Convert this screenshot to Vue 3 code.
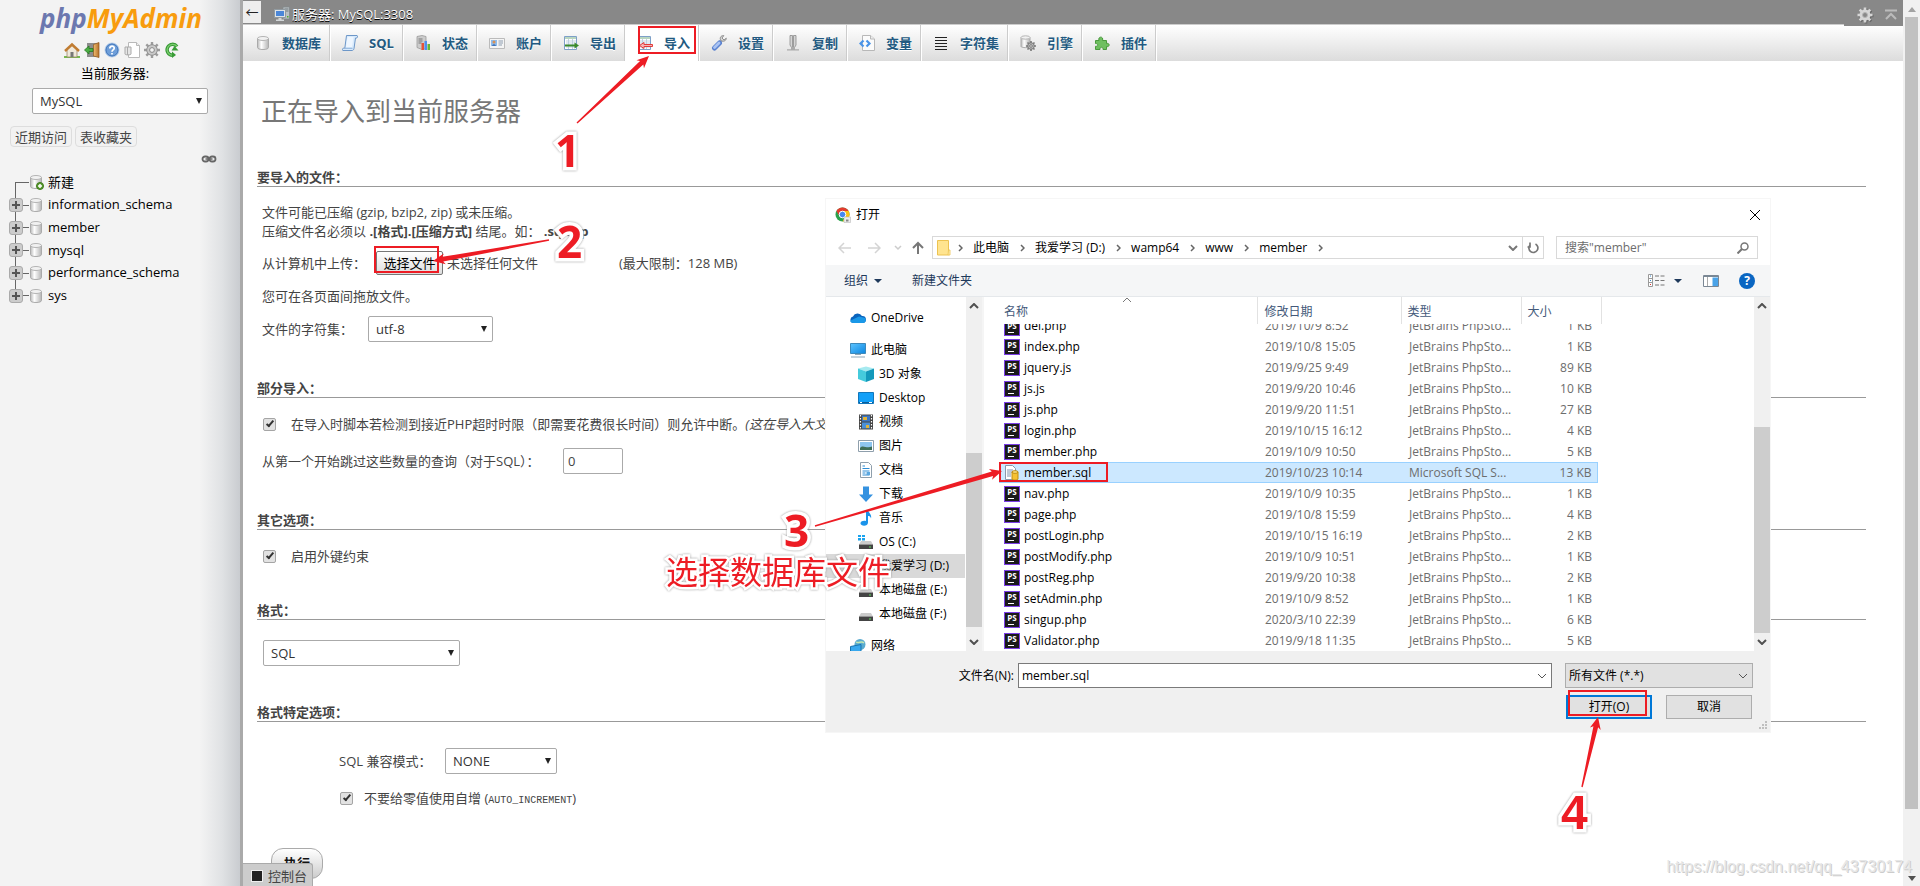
<script setup>
import { ref } from 'vue'

const server = ref('MySQL')
const charset = ref('utf-8')
const format = ref('SQL')
const compat = ref('NONE')
const skip = ref('0')
const allowInterrupt = ref(true)
const foreignKeys = ref(true)
const noAutoIncrement = ref(true)
const fileName = ref('member.sql')
const fileType = ref('all')
const query = ref('')

const shortcuts = [
  { icon: 'home', label: '主页' },
  { icon: 'exit', label: '退出' },
  { icon: 'help', label: '文档' },
  { icon: 'docs', label: '手册' },
  { icon: 'gear', label: '设置' },
  { icon: 'reload', label: '刷新' },
]

const databases = ['information_schema', 'member', 'mysql', 'performance_schema', 'sys']

const tabs = [
  { icon: 'db', label: '数据库' },
  { icon: 'sql', label: 'SQL' },
  { icon: 'status', label: '状态' },
  { icon: 'users', label: '账户' },
  { icon: 'export', label: '导出' },
  { icon: 'import', label: '导入', active: true },
  { icon: 'wrench', label: '设置' },
  { icon: 'replication', label: '复制' },
  { icon: 'vars', label: '变量' },
  { icon: 'charset', label: '字符集' },
  { icon: 'engine', label: '引擎' },
  { icon: 'plugin', label: '插件' },
]

const crumbs = ['此电脑', '我爱学习 (D:)', 'wamp64', 'www', 'member']

const places = [
  { icon: 'onedrive', label: 'OneDrive', top: true },
  { icon: 'pc', label: '此电脑', top: true },
  { icon: 'cube', label: '3D 对象' },
  { icon: 'desktop', label: 'Desktop' },
  { icon: 'video', label: '视频' },
  { icon: 'picture', label: '图片' },
  { icon: 'document', label: '文档' },
  { icon: 'download', label: '下载' },
  { icon: 'music', label: '音乐' },
  { icon: 'osdisk', label: 'OS (C:)' },
  { icon: 'disk', label: '我爱学习 (D:)', current: true },
  { icon: 'disk', label: '本地磁盘 (E:)' },
  { icon: 'disk', label: '本地磁盘 (F:)' },
  { icon: 'network', label: '网络', top: true },
]

const php = 'JetBrains PhpSto...'
const files = [
  { name: 'del.php', date: '2019/10/9 8:52', type: php, size: '1 KB', cut: true },
  { name: 'index.php', date: '2019/10/8 15:05', type: php, size: '1 KB' },
  { name: 'jquery.js', date: '2019/9/25 9:49', type: php, size: '89 KB' },
  { name: 'js.js', date: '2019/9/20 10:46', type: php, size: '10 KB' },
  { name: 'js.php', date: '2019/9/20 11:51', type: php, size: '27 KB' },
  { name: 'login.php', date: '2019/10/15 16:12', type: php, size: '4 KB' },
  { name: 'member.php', date: '2019/10/9 10:50', type: php, size: '5 KB' },
  { name: 'member.sql', date: '2019/10/23 10:14', type: 'Microsoft SQL S...', size: '13 KB', selected: true },
  { name: 'nav.php', date: '2019/10/9 10:35', type: php, size: '1 KB' },
  { name: 'page.php', date: '2019/10/8 15:59', type: php, size: '4 KB' },
  { name: 'postLogin.php', date: '2019/10/15 16:19', type: php, size: '2 KB' },
  { name: 'postModify.php', date: '2019/10/9 10:51', type: php, size: '1 KB' },
  { name: 'postReg.php', date: '2019/9/20 10:38', type: php, size: '2 KB' },
  { name: 'setAdmin.php', date: '2019/10/9 8:52', type: php, size: '1 KB' },
  { name: 'singup.php', date: '2020/3/10 22:39', type: php, size: '6 KB' },
  { name: 'Validator.php', date: '2019/9/18 11:35', type: php, size: '5 KB' },
]

// Tapered arrow outline running from (x1, y1) to its tip at (x2, y2).
function arrow(x1, y1, x2, y2) {
  const len = Math.hypot(x2 - x1, y2 - y1)
  const ux = (x2 - x1) / len
  const uy = (y2 - y1) / len
  const at = (along, side) => `${x1 + ux * along - uy * side},${y1 + uy * along + ux * side}`
  return [
    at(0, 0.7), at(len - 10, 2.4), at(len - 12, 5.5), at(len, 0),
    at(len - 12, -5.5), at(len - 10, -2.4), at(0, -0.7),
  ].join(' ')
}

const arrows = [
  arrow(577, 123, 649, 56),
  arrow(549, 240, 433, 261),
  arrow(815, 526, 1002, 471),
  arrow(1582, 787, 1598, 717),
]
</script>

<template>
  <div class="page">
    <svg class="sprite" aria-hidden="true">
      <defs>
        <linearGradient id="g-cyl" x1="0" x2="1"><stop offset="0" stop-color="#b9b9b9" /><stop offset=".35" stop-color="#fff" /><stop offset="1" stop-color="#b4b4b4" /></linearGradient>
        <linearGradient id="g-blue" x1="0" x2="1" y2="1"><stop offset="0" stop-color="#5cc4ff" /><stop offset="1" stop-color="#0d86e0" /></linearGradient>
        <linearGradient id="g-door" x1="0" x2="1"><stop offset="0" stop-color="#f0bd72" /><stop offset="1" stop-color="#b5702a" /></linearGradient>
      </defs>
      <symbol id="i-cyl" viewBox="0 0 16 16"><path d="M2.5 3.5v9c0 1.3 2.400 2 5.500 2s5.500-.7 5.500-2v-9z" fill="url(#g-cyl)" stroke="#aaa" /><ellipse cx="8" cy="3.500" rx="5.500" ry="2" fill="#f1f1f1" stroke="#b5b5b5" /></symbol>
      <symbol id="i-db" viewBox="0 0 16 16"><use href="#i-cyl" /></symbol>
      <symbol id="i-newdb" viewBox="0 0 16 16"><use href="#i-cyl" /><circle cx="12" cy="12" r="3.500" fill="#5a9c31" stroke="#3f7a1c" /><path d="M10 12h4M12 10v4" stroke="#fff" stroke-width="1.500" /></symbol>
      <symbol id="i-home" viewBox="0 0 16 16"><path d="M0 14h16v2H0z" fill="#78b850" /><path d="M3 7.500 8 3l5 4.500V15H3z" fill="#efe8da" stroke="#9d8867" stroke-width=".8" /><path d="M1 9 8 2.500 15 9" fill="none" stroke="#c07c32" stroke-width="2.400" /><path d="M6.500 10h3v5h-3z" fill="#777" /></symbol>
      <symbol id="i-exit" viewBox="0 0 16 16"><path d="M3 1h12v14H3z" fill="#8d8d8d" /><path d="M9.500 2.500 15 .5v15l-5.500-1.500z" fill="url(#g-door)" stroke="#91571c" stroke-width=".7" /><path d="M.5 8 5 4v2.500h4v3H5V12z" fill="#4bae44" stroke="#277a22" stroke-width=".8" /></symbol>
      <symbol id="i-help" viewBox="0 0 16 16"><circle cx="8" cy="8" r="7" fill="#6e9ed9" stroke="#b8cfec" /><circle cx="8" cy="8" r="6" fill="none" stroke="#4679bb" /><path d="M5.800 6.500c0-3.200 4.600-3 4.400-.2C10.100 7.900 8 8 8 9.700M8 11v1.600" fill="none" stroke="#fff" stroke-width="1.700" /></symbol>
      <symbol id="i-docs" viewBox="0 0 16 16"><path d="M4.500.5h8l3 3v12h-11z" fill="#fff" stroke="#b9b9b9" /><path d="M12.500.5v3h3" fill="#eee" stroke="#b9b9b9" /><path d="M1 5v7c0 1.200 6 1.200 6 0V5z" fill="#e5e5e5" stroke="#aaa" /><path d="M3.500 5v8" stroke="#aaa" /></symbol>
      <symbol id="i-gear" viewBox="0 0 16 16"><path d="M8 0v16M0 8h16M2.300 2.300l11.400 11.400M13.700 2.300 2.300 13.700" stroke="#9b9b9b" stroke-width="2.400" /><circle cx="8" cy="8" r="5.300" fill="#c9c9c9" stroke="#929292" /><circle cx="8" cy="8" r="2.400" fill="#f3f3f3" stroke="#888" /></symbol>
      <symbol id="i-gear-light" viewBox="0 0 16 16"><path d="M8 .5v15M.5 8h15M2.700 2.700l10.600 10.600M13.300 2.700 2.700 13.300" stroke="#d6d6d6" stroke-width="2.600" /><circle cx="8" cy="8" r="5.500" fill="#d6d6d6" /><circle cx="8" cy="8" r="2.500" fill="#888" stroke="#b4b4b4" /></symbol>
      <symbol id="i-reload" viewBox="0 0 16 16"><path d="M13 4.500A5.500 5.500 0 1 0 8.500 13.300" fill="none" stroke="#389b36" stroke-width="3.400" /><path d="M13 4.500A5.500 5.500 0 1 0 8.500 13.300" fill="none" stroke="#7ccc70" stroke-width="1.300" /><path d="M7.500 8.500h7L10.500 4z" fill="#389b36" /><path d="m8 9.500 4 3.500-4 3z" fill="#389b36" /></symbol>
      <symbol id="i-link" viewBox="0 0 16 8"><rect x="1.500" y="1.500" width="6" height="5" rx="2.500" fill="none" stroke="#666" stroke-width="1.800" /><rect x="8.500" y="1.500" width="6" height="5" rx="2.500" fill="none" stroke="#666" stroke-width="1.800" /><path d="M4.500 4h7" stroke="#666" stroke-width="1.500" /></symbol>
      <symbol id="i-server" viewBox="0 0 16 16"><path d="M9 1h6.500v12H9z" fill="#b9c0c4" stroke="#80888c" stroke-width=".8" /><path d="M10.500 3h4M10.500 5h4" stroke="#707a7e" /><path d="M.5 3.500h11v8H.5z" fill="#dfe3e6" stroke="#909aa0" /><path d="M2 5h8v5H2z" fill="#4a86d8" /><path d="M4.500 12h3v1.500H10V15H2v-1.500h2.500z" fill="#d2d6d8" /><path d="M13 10h1.500v1.500H13z" fill="#4caf2c" /></symbol>
      <symbol id="i-sql" viewBox="0 0 16 16"><path d="M4.500.5H15c.8 0 .8 2.500-.5 2.500h-1L12 13.500c-.2 1.200-1 2-2 2H1c-1 0-.8-2.300.5-2.300h1.300z" fill="#d8eafc" stroke="#6d97c8" /><path d="M3 13.300h7.500" stroke="#8fb2da" /><path d="M5.500 2h6l-1.500 10H4z" fill="#eef6ff" /></symbol>
      <symbol id="i-status" viewBox="0 0 16 16"><path d="M2 1.500 7 .5l4 1v12l-4 1-5-2z" fill="#ccc" stroke="#999" stroke-width=".8" /><path d="M3.500 4h4M3.500 6h4M3.500 8h3" stroke="#777" /><path d="M6.500 8H9v7H6.500z" fill="#e65236" /><path d="M9.500 6H12v9H9.500z" fill="#4f8ef0" /><path d="M12.500 9H15v6h-2.500z" fill="#65b73b" /></symbol>
      <symbol id="i-users" viewBox="0 0 16 16"><path d="M.5 3.500h15v10H.5z" fill="#f5f5f5" stroke="#bbb" /><path d="M2 5h6v6H2z" fill="#8ebcec" /><circle cx="5" cy="7" r="1.500" fill="#d89054" /><path d="M3 11c.5-2.500 3.500-2.500 4 0z" fill="#4372b4" /><path d="M9.500 6H14M9.500 8H14M9.500 10H13" stroke="#8d9db0" /></symbol>
      <symbol id="i-sheet" viewBox="0 0 16 16"><path d="M1.500 1.500h12v13h-12z" fill="#fff" stroke="#7ea0c8" /><path d="M2 2h11v2H2z" fill="#b9d6c0" /><path d="M3 6h10M3 8h10M3 10h10M3 12h10M5.500 4v10M9.500 4v10" stroke="#b4c8dc" stroke-width=".8" /></symbol>
      <symbol id="i-export" viewBox="0 0 16 16"><use href="#i-sheet" /><path d="M2 9.500h9.500V7.500L16 10.500l-4.500 3v-2H2z" fill="#3a8a2c" /></symbol>
      <symbol id="i-import" viewBox="0 0 16 16"><use href="#i-sheet" /><path d="M15.500 9.500H7V7.500L2.500 10.500l4.500 3v-2h8.500z" fill="#f7b4b4" stroke="#e23a3a" /></symbol>
      <symbol id="i-wrench" viewBox="0 0 16 16"><path d="m8 8 4-4" stroke="#aaa" stroke-width="2.600" /><path d="M15.300 3.200 13 5l-2-2L12.800.6C9.500.3 8.500 3.500 9.800 5.200c1.500 1.700 5.300 1.300 5.500-2z" fill="#d5d5d5" stroke="#8f8f8f" /><path d="M3.500 13 8.500 8" stroke="#5a82d0" stroke-width="5" stroke-linecap="round" /><path d="M3.500 12.500 8 8" stroke="#a9c3f3" stroke-width="2.800" stroke-linecap="round" /></symbol>
      <symbol id="i-replication" viewBox="0 0 16 16"><path d="M5 .5h2.500v12H6.500L5 10zM8.500.5H11V10l-1.500 2.500h-1z" fill="#d5d5d5" stroke="#8a8a8a" stroke-width=".8" /><path d="M2 14.800h12M6 13.500h4" stroke="#aaa" stroke-width="1.300" /></symbol>
      <symbol id="i-vars" viewBox="0 0 16 16"><path d="M3.500.5h8l4 3.500v11.500h-12z" fill="#fbfbfb" stroke="#b8b8b8" /><path d="M11.500.5V4h4" fill="#eee" stroke="#b8b8b8" /><path d="M4.500 5.500 1.500 8.500l3 3M7.500 5.500l3 3-3 3" fill="none" stroke="#4a94e8" stroke-width="2.200" /></symbol>
      <symbol id="i-charset" viewBox="0 0 16 16"><path d="M2 2.500h12M2 5.500h12M2 8.500h12M2 11.500h12M2 14.500h12" stroke="#222" /></symbol>
      <symbol id="i-engine" viewBox="0 0 16 16"><path d="M1 2.500v9c0 1.500 9 1.500 9 0v-9z" fill="url(#g-cyl)" stroke="#aaa" /><ellipse cx="5.500" cy="2.500" rx="4.500" ry="1.700" fill="#f1f1f1" stroke="#b5b5b5" /><path d="M11 6v10M6 11h10M7.500 7.500l7 7M14.500 7.500l-7 7" stroke="#777" stroke-width="1.600" /><circle cx="11" cy="11" r="3.300" fill="#bbb" stroke="#777" /><circle cx="11" cy="11" r="1.300" fill="#eee" stroke="#777" /></symbol>
      <symbol id="i-plugin" viewBox="0 0 16 16"><path d="M1.500 5.500H5c-1.500-4.500 5-4.500 3.500 0h4v3c3.500-1 3.500 4 0 3v3H9c.5-3-3.500-3-3 0H1.500v-3.200c3 .5 3-3 0-2.800z" fill="#6fbf60" stroke="#4a9a3d" /></symbol>
      <symbol id="i-chrome" viewBox="0 0 16 16"><circle cx="7.500" cy="7.500" r="7" fill="#2ba24c" /><path d="M1.400 4A7 7 0 0 1 13.600 4H7.500l-3 5z" fill="#e33b2e" /><path d="M13.600 4A7 7 0 0 1 7.500 14.500L10.600 9 7.500 4z" fill="#fbc116" /><circle cx="7.500" cy="7.500" r="3.300" fill="#4688f1" stroke="#fff" /><path d="M9 10h6.500v5.500H9z" fill="#ececec" stroke="#bbb" stroke-width=".6" /><path d="M11 12.500h2.500v2H11z" fill="#888" /></symbol>
      <symbol id="i-folder" viewBox="0 0 16 16"><path d="M1.500.5h11V15h-11z" fill="#ffe48f" stroke="#edc350" /><path d="M12.500 10h1.500v5h-2z" fill="#fff2b8" stroke="#edc350" stroke-width=".8" /></symbol>
      <symbol id="i-onedrive" viewBox="0 0 16 16"><path d="M3.500 13A3.300 3.300 0 0 1 3 6.500 5 5 0 0 1 12 6a3.500 3.500 0 0 1 .8 7z" fill="#0a64bd" /><path d="M3.500 13c-1.700 0-3-1-3.400-2.300L9 6.500l5.500 1.300c2.300 1.700 1.500 5-1.500 5.200z" fill="#1a98e8" /></symbol>
      <symbol id="i-pc" viewBox="0 0 16 16"><path d="M.5 1.500h15v10H.5z" fill="url(#g-blue)" stroke="#3d89bb" /><path d="M5 12.500h6M1 15h14" stroke="#8ea7b8" /></symbol>
      <symbol id="i-cube" viewBox="0 0 16 16"><path d="m0 2.500 8-2 8 2-8 3z" fill="#a6eaf0" /><path d="m0 2.500 8 3V16l-8-3z" fill="#45cbdc" /><path d="m16 2.500-8 3V16l8-3z" fill="#1399bb" /></symbol>
      <symbol id="i-desktop" viewBox="0 0 16 16"><path d="M.5 2.500h15v11H.5z" fill="#12a0f8" stroke="#1277bb" /><path d="M1 12.500h14" stroke="#0b5c98" /><path d="M2 12.500h2M11 12.500h3" stroke="#fff" /></symbol>
      <symbol id="i-video" viewBox="0 0 16 16"><path d="M1 .5h14v15H1z" fill="#444" /><path d="M4 1.500h8v6H4z" fill="#3b76c4" /><path d="M4 8.500h8v6H4z" fill="#4b90d8" /><path d="M5 3h4v3H5zM8 11h3v3H8z" fill="#e2b438" /><path d="M2.500 1v15M13.500 1v15" stroke="#fff" stroke-width="1.200" stroke-dasharray="1.500 1.500" /></symbol>
      <symbol id="i-picture" viewBox="0 0 16 16"><path d="M.5 2.500h15v11H.5z" fill="#fff" stroke="#8f9fac" /><path d="M2 4h12v8H2z" fill="#8ec6f0" /><path d="M2 10c3-4 6 1 12-1.500V12H2z" fill="#3f6e58" /></symbol>
      <symbol id="i-document" viewBox="0 0 16 16"><path d="M2.500.5h8l3 3v12h-11z" fill="#fff" stroke="#8f9fac" /><path d="M4.500 4H7M4.500 6.500h7M4.500 9h7M4.500 11h3M4.500 13h7" stroke="#2d8dd6" /><path d="M8.500 10H12v3H8.500z" fill="#5aa7e0" /></symbol>
      <symbol id="i-download" viewBox="0 0 16 16"><path d="M5 .5h6v8h4L8 16 1 8.500h4z" fill="#3592e0" /></symbol>
      <symbol id="i-music" viewBox="0 0 16 16"><path d="M8 0h2c.5 3 4 4 3 8.500-.5-2-1.500-2.500-3-2.500v6.500C10 17 2 16.500 2.500 13c.5-2.200 3.500-2.800 5.500-2z" fill="#1a93ea" /></symbol>
      <symbol id="i-disk" viewBox="0 0 16 16"><path d="M3 7h10l2 3.500H1z" fill="#ccc" /><path d="M1 10.500h14V15H1z" fill="#444" /><path d="M11 13h2" stroke="#5be05b" /></symbol>
      <symbol id="i-osdisk" viewBox="0 0 16 16"><use href="#i-disk" /><path d="M0 1h3v2H0zM4 1h3v2H4zM0 4h3v2.500H0zM4 4h3v2.500H4z" fill="#1aa3ee" /></symbol>
      <symbol id="i-network" viewBox="0 0 16 16"><circle cx="10" cy="6.500" r="5.500" fill="#5aabcf" /><path d="M6 4c3 2 5-2 8 1" fill="none" stroke="#c4e7b2" stroke-width="1.500" /><path d="M.5 8.500 11 6.500v8l-10.500 1z" fill="#37a8ee" stroke="#1674b0" /></symbol>
      <symbol id="i-sqlfile" viewBox="0 0 16 16"><path d="M1.500.5h7l3 3v11h-10z" fill="#fff" stroke="#8a97a8" /><path d="M3 5h6M3 7h6M3 9h4M3 11h4" stroke="#7f93ad" /><path d="M8 7v7c0 1.500 6 1.500 6 0V7z" fill="#f5c132" stroke="#bf8d10" /><ellipse cx="11" cy="7" rx="3" ry="1.300" fill="#ffe68a" stroke="#bf8d10" /></symbol>
    </svg>

    <aside class="sidebar">
      <a class="logo" href="#"><span>php</span>MyAdmin</a>
      <nav class="shortcuts">
        <a v-for="s in shortcuts" :key="s.icon" href="#" :aria-label="s.label"><svg class="ico"><use :href="'#i-' + s.icon" /></svg></a>
      </nav>
      <label class="server-label" for="server">当前服务器:</label>
      <div class="select server-select">
        <select id="server" v-model="server"><option>MySQL</option></select>
      </div>
      <div class="pills">
        <button type="button">近期访问</button>
        <button type="button">表收藏夹</button>
      </div>
      <a class="link-toggle" href="#" aria-label="取消链接"><svg><use href="#i-link" /></svg></a>
      <ul class="tree">
        <li class="new"><svg class="ico"><use href="#i-newdb" /></svg><a href="#">新建</a></li>
        <li v-for="d in databases" :key="d">
          <button type="button" class="expand" :aria-label="'展开 ' + d"></button>
          <svg class="ico"><use href="#i-db" /></svg><a href="#">{{ d }}</a>
        </li>
      </ul>
    </aside>

    <div class="main">
      <header class="topbar">
        <button type="button" class="collapse" aria-label="折叠">←</button>
        <svg class="ico"><use href="#i-server" /></svg>
        <a href="#">服务器: MySQL:3308</a>
        <div class="corner">
          <svg class="ico"><use href="#i-gear-light" /></svg>
          <svg class="to-top" viewBox="0 0 12 12"><path d="M0 1.500h12M1 10l5-5 5 5" fill="none" stroke="#bbb" stroke-width="2" /></svg>
        </div>
      </header>
      <nav class="tabs">
        <a v-for="t in tabs" :key="t.icon" href="#" :class="{ active: t.active }"><svg class="ico"><use :href="'#i-' + t.icon" /></svg>{{ t.label }}</a>
      </nav>

      <form class="content" @submit.prevent>
        <h1>正在导入到当前服务器</h1>

        <section>
          <h2>要导入的文件：</h2>
          <div class="body">
            <p>文件可能已压缩 (gzip, bzip2, zip) 或未压缩。<br>压缩文件名必须以 <b>.[格式].[压缩方式]</b> 结尾。如： <b>.sql.zip</b></p>
            <div class="row upload">
              <span class="caption">从计算机中上传：</span>
              <button type="button" class="file-button">选择文件</button>
              <span class="file-state">未选择任何文件</span>
              <span>(最大限制：128 MB)</span>
            </div>
            <div class="row note">您可在各页面间拖放文件。</div>
            <div class="row">
              <label class="caption charset-caption" for="charset">文件的字符集：</label>
              <div class="select charset-select">
                <select id="charset" v-model="charset"><option>utf-8</option></select>
              </div>
            </div>
          </div>
        </section>

        <section>
          <h2>部分导入：</h2>
          <div class="body">
            <label class="row check"><input v-model="allowInterrupt" type="checkbox"><span>在导入时脚本若检测到接近PHP超时时限（即需要花费很长时间）则允许中断。<i>(这在导入大文件</i></span></label>
            <div class="row">
              <label class="skip-caption" for="skip">从第一个开始跳过这些数量的查询（对于SQL）：</label>
              <input id="skip" v-model="skip" class="skip" type="text">
            </div>
          </div>
        </section>

        <section class="short">
          <h2>其它选项：</h2>
          <div class="body">
            <label class="row check"><input v-model="foreignKeys" type="checkbox"><span>启用外键约束</span></label>
          </div>
        </section>

        <section>
          <h2>格式：</h2>
          <div class="body roomy">
            <div class="select format-select">
              <select id="format" v-model="format" aria-label="格式"><option>SQL</option></select>
            </div>
          </div>
        </section>

        <section>
          <h2>格式特定选项：</h2>
          <div class="body roomy nested">
            <div class="row">
              <label class="compat-caption" for="compat">SQL 兼容模式：</label>
              <div class="select compat-select">
                <select id="compat" v-model="compat"><option>NONE</option></select>
              </div>
            </div>
            <label class="row check tight"><input v-model="noAutoIncrement" type="checkbox"><span>不要给零值使用自增 (<code>AUTO_INCREMENT</code>)</span></label>
          </div>
        </section>

        <button type="submit" class="go">执行</button>
      </form>

      <button type="button" class="console"><span class="console-icon"></span>控制台</button>
    </div>

    <div class="page-scroll" aria-hidden="true">
      <i class="tri up"></i><div class="track"><div class="page-thumb"></div></div><i class="tri down"></i>
    </div>

    <div class="dialog" role="dialog" aria-label="打开">
      <div class="titlebar">
        <svg class="ico"><use href="#i-chrome" /></svg><span>打开</span>
        <button type="button" class="close" aria-label="关闭"><svg viewBox="0 0 10 10"><path d="m0 0 10 10M10 0 0 10" stroke="#000" /></svg></button>
      </div>
      <div class="addressbar">
        <div class="history">
          <svg viewBox="0 0 14 12" width="14" height="12"><path d="M13 6H1M6 1 1 6l5 5" fill="none" stroke="#d4d4d4" stroke-width="1.500" /></svg>
          <svg viewBox="0 0 14 12" width="14" height="12"><path d="M1 6h12M8 1l5 5-5 5" fill="none" stroke="#d4d4d4" stroke-width="1.500" /></svg>
          <svg viewBox="0 0 8 6" width="8" height="6"><path d="m1 1 3 3 3-3" fill="none" stroke="#ccc" stroke-width="1.500" /></svg>
          <svg viewBox="0 0 12 14" width="12" height="14"><path d="M6 13V2M1 7l5-5 5 5" fill="none" stroke="#777" stroke-width="2" /></svg>
        </div>
        <div class="path">
          <svg class="ico"><use href="#i-folder" /></svg>
          <svg class="sep" viewBox="0 0 5 8"><path d="m1 1 3 3-3 3" fill="none" stroke="#666" stroke-width="1.500" /></svg>
          <template v-for="c in crumbs" :key="c">
            <a href="#">{{ c }}</a>
            <svg class="sep" viewBox="0 0 5 8"><path d="m1 1 3 3-3 3" fill="none" stroke="#666" stroke-width="1.500" /></svg>
          </template>
          <svg class="drop" viewBox="0 0 10 6"><path d="m1 1 4 4 4-4" fill="none" stroke="#777" stroke-width="2" /></svg>
          <button type="button" class="refresh" aria-label="刷新"><svg viewBox="0 0 12 12" width="12" height="12"><path d="M8.500 2A4.500 4.500 0 1 1 3 3M3 .5V5H.5" fill="none" stroke="#777" stroke-width="1.700" /></svg></button>
        </div>
        <div class="search">
          <input v-model="query" type="text" aria-label="搜索" placeholder="搜索&quot;member&quot;">
          <svg viewBox="0 0 12 12" width="12" height="12"><circle cx="7.500" cy="4.500" r="3.500" fill="none" stroke="#777" stroke-width="1.500" /><path d="m5 7-4.500 4.500" stroke="#777" stroke-width="2" /></svg>
        </div>
      </div>
      <div class="toolbar">
        <button type="button">组织<i class="caret"></i></button>
        <button type="button">新建文件夹</button>
        <div class="views">
          <svg viewBox="0 0 17 13" width="17" height="13"><path d="M.5.5h4v12h-4zM.5 4.500h4M.5 8.500h4" fill="#fff" stroke="#999" /><path d="M7 2h4M12.500 2h4M7 6.500h4M12.500 6.500h4M7 11h4M12.500 11h4" stroke="#777" /><path d="M2 2h1M2 6.500h1" stroke="#38c" /><path d="M2 10.500h1" stroke="#d33" /></svg>
          <i class="caret"></i>
          <svg class="pane" viewBox="0 0 16 12" width="16" height="12"><path d="M.5.5h15v11H.5z" fill="#fff" stroke="#7a8794" /><path d="M1 1.500h14" stroke="#7a8794" /><path d="M4.500 2v9" stroke="#aaa" /><path d="M9.500 2.500H15V11H9.500z" fill="#4aa3e8" /></svg>
          <button type="button" class="about" aria-label="帮助">?</button>
        </div>
      </div>
      <div class="panes">
        <ul class="places">
          <li v-for="p in places" :key="p.label" :class="{ top: p.top, current: p.current }"><svg class="ico"><use :href="'#i-' + p.icon" /></svg>{{ p.label }}</li>
        </ul>
        <div class="bar">
          <svg viewBox="0 0 10 6"><path d="m1 5 4-4 4 4" fill="none" stroke="#505050" stroke-width="2" /></svg>
          <div class="track"><div class="thumb-places"></div></div>
          <svg viewBox="0 0 10 6"><path d="m1 1 4 4 4-4" fill="none" stroke="#505050" stroke-width="2" /></svg>
        </div>
        <div class="list">
          <table>
            <colgroup><col class="c-name"><col class="c-date"><col class="c-type"><col class="c-size"><col class="c-end"></colgroup>
            <thead>
              <tr>
                <th>名称<svg class="sort" viewBox="0 0 10 6"><path d="m1 5 4-4 4 4" fill="none" stroke="#777" /></svg></th>
                <th>修改日期</th><th>类型</th><th colspan="2">大小</th>
              </tr>
            </thead>
            <tbody>
              <tr v-for="f in files" :key="f.name" :class="{ selected: f.selected, cut: f.cut }">
                <td>
                  <div class="cell name">
                    <svg v-if="f.selected" class="ico"><use href="#i-sqlfile" /></svg>
                    <span v-else class="ps">PS</span>
                    {{ f.name }}
                  </div>
                </td>
                <td><div class="cell">{{ f.date }}</div></td>
                <td><div class="cell">{{ f.type }}</div></td>
                <td class="size"><div class="cell">{{ f.size }}</div></td>
              </tr>
            </tbody>
          </table>
        </div>
        <div class="bar">
          <svg viewBox="0 0 10 6"><path d="m1 5 4-4 4 4" fill="none" stroke="#505050" stroke-width="2" /></svg>
          <div class="track"><div class="thumb-list"></div></div>
          <svg viewBox="0 0 10 6"><path d="m1 1 4 4 4-4" fill="none" stroke="#505050" stroke-width="2" /></svg>
        </div>
      </div>
      <div class="footer">
        <label for="fname">文件名(N):</label>
        <div class="fname">
          <input id="fname" v-model="fileName" type="text">
          <svg viewBox="0 0 10 6"><path d="m1 1 4 4 4-4" fill="none" stroke="#555" /></svg>
        </div>
        <div class="right">
          <div class="ftype">
            <select v-model="fileType" aria-label="文件类型"><option value="all">所有文件 (*.*)</option></select>
            <svg viewBox="0 0 10 6"><path d="m1 1 4 4 4-4" fill="none" stroke="#555" /></svg>
          </div>
          <div class="actions">
            <button type="button" class="primary">打开(O)</button>
            <button type="button">取消</button>
          </div>
        </div>
        <svg class="grip" viewBox="0 0 9 9"><path d="M7 0h2v2H7zM7 3h2v2H7zM7 6h2v2H7zM4 3h2v2H4zM4 6h2v2H4zM1 6h2v2H1z" fill="#bfbfbf" /></svg>
      </div>
    </div>

    <div class="marks" aria-hidden="true">
      <div class="frame f-tab"></div>
      <div class="frame f-choose"></div>
      <div class="frame f-file"></div>
      <div class="frame f-open"></div>
      <svg class="arrows"><polygon v-for="(a, i) in arrows" :key="i" :points="a" /></svg>
      <b class="num n1">1</b>
      <b class="num n2">2</b>
      <b class="num n3">3</b>
      <b class="num n4">4</b>
      <span class="num caption3">选择数据库文件</span>
      <span class="watermark">https://blog.csdn.net/qq_43730174</span>
    </div>
  </div>
</template>

<style>
html,
body {
  background: #fff;
  overflow: hidden;
}
</style>

<style scoped>
.page {
  position: relative;
  display: flex;
  height: 100vh;
  overflow: hidden;
  color: #444;
  font: 13px/19px "Open Sans", "Noto Sans CJK SC", sans-serif;
}
.page *,
.page *::before,
.page *::after { box-sizing: border-box; }
button,
input,
select { font: inherit; color: inherit; margin: 0; }
a { color: inherit; text-decoration: none; }
ul { list-style: none; margin: 0; padding: 0; }
.sprite { position: absolute; width: 0; height: 0; }
.ico { width: 16px; height: 16px; flex: none; display: block; }

/* navigation panel */
.sidebar {
  width: 243px;
  flex: none;
  border-right: 3px solid #aaa;
  background: linear-gradient(to right, #f3f3f3 200px, #e0e2e4 222px, #c9ccd0 240px);
  color: #000;
}
.logo {
  display: block;
  height: 36px;
  padding-left: 2px;
  text-align: center;
  font: italic bold 26px/36px "Open Sans", sans-serif;
  color: #f89c0e;
}
.logo span { color: #6c78af; }
.shortcuts { display: flex; justify-content: center; gap: 4px; padding: 6px 0 6px 4px; height: 28px; }
.server-label { display: block; width: 230px; text-align: center; line-height: 18px; }
.select { position: relative; }
.select::after {
  content: "";
  position: absolute;
  right: 6px;
  top: 10px;
  border: 3px solid transparent;
  border-top: 6px solid #222;
  border-bottom: 0;
  pointer-events: none;
}
.select select {
  appearance: none;
  display: block;
  width: 100%;
  height: 26px;
  padding: 0 20px 0 7px;
  border: 1px solid #aaa;
  border-radius: 2px;
  background: #fff;
  color: #333;
  outline: 0;
}
.server-select { margin: 6px 32px 0; }
.pills { display: flex; gap: 3px; margin: 12px 0 0 10px; }
.pills button {
  width: 62px;
  height: 21px;
  padding: 0;
  border: 1px solid #ddd;
  border-radius: 4px;
  background: #f2f2f2;
  color: #444;
  white-space: nowrap;
  line-height: 18px;
}
.link-toggle { display: block; margin: 8px 23px 0 auto; width: 16px; }
.link-toggle svg { display: block; width: 16px; height: 8px; }
.tree { display: grid; grid-auto-rows: 1fr; height: 136px; margin-top: 8px; padding-left: 9px; }
.tree li { position: relative; display: flex; align-items: center; }
.tree li::before { content: ""; position: absolute; left: 6px; top: 0; bottom: 0; border-left: 1px solid #666; }
.tree li::after { content: ""; position: absolute; left: 6px; top: 11px; width: 14px; border-top: 1px solid #666; }
.tree .new::before { top: 11px; }
.tree li:last-child::before { bottom: 50%; }
.tree .ico { position: relative; z-index: 1; margin-left: 5px; }
.tree .new .ico { margin-left: 19px; }
.tree a { margin-left: 4px; }
.expand {
  position: relative;
  z-index: 1;
  width: 14px;
  height: 14px;
  padding: 0;
  border: 1px solid #aaa;
  border-radius: 3px;
  background: linear-gradient(#555, #555) center / 8px 2px no-repeat, linear-gradient(#555, #555) center / 2px 8px no-repeat, #ccc;
}

/* top */
.main { position: relative; flex: 1; min-width: 0; background: #fff; overflow: hidden; }
.topbar { display: flex; align-items: center; height: 24px; background: #888; color: #fff; text-shadow: 0 1px 0 #000; }
.topbar a { margin: 4px 0 0 2px; }
.topbar .ico { margin: 4px 0 0 13px; }
.collapse { width: 18px; height: 22px; padding: 0; border: 0; background: #eee; color: #222; line-height: 20px; }
.corner { display: flex; align-self: flex-start; align-items: center; gap: 12px; margin-left: auto; width: 59px; height: 26px; background: #888; position: relative; z-index: 1; }
.corner .ico { margin: 4px 0 0 13px; filter: drop-shadow(1px 1px 0 #666); }
.to-top { width: 12px; height: 12px; margin-top: 4px; }
.tabs {
  display: flex;
  height: 37px;
  border-top: 1px solid #ccc;
  background: linear-gradient(#fff, #dcdcdc);
  color: #235a81;
  font-weight: bold;
  text-shadow: 0 1px 0 #fff;
}
.tabs a { display: flex; align-items: center; padding: 0 8px 0 12px; border-right: 1px solid #ccc; box-shadow: 1px 0 0 #fff; }
.tabs .ico { margin-right: 11px; }
.tabs .active { background: #fff; }

/* form */
.content { padding: 32px 37px 0 14px; }
h1 { margin: 0 0 38px 4px; font-size: 26px; line-height: 36px; font-weight: normal; color: #777; }
h2 { margin: 0; padding-top: 1px; border-bottom: 1px solid #999; font-size: 13px; line-height: 18px; font-weight: bold; color: #444; }
section { margin-bottom: 36px; }
section.short { margin-bottom: 32px; }
.body { padding: 14px 0 0 5px; }
.body.roomy { padding: 20px 0 0 6px; }
.body.nested { padding: 26px 0 0 82px; }
.body p { margin: 2px 0 9px; }
.row { display: flex; align-items: center; min-height: 26px; margin-bottom: 10px; white-space: nowrap; }
.row.check { min-height: 24px; margin-bottom: 12px; }
.row.tight { min-height: 28px; }
.row:last-child { margin-bottom: 0; }
.row.note { min-height: 20px; }
.caption { width: 114px; }
.charset-caption { width: 106px; }
.file-button {
  width: 67px;
  height: 24px;
  padding: 0;
  border: 1px solid #777;
  border-radius: 2px;
  background: linear-gradient(#fff, #ddd);
  color: #000;
}
.file-state { width: 176px; padding-left: 4px; }
.charset-select { width: 125px; }
.check input {
  appearance: none;
  width: 13px;
  height: 13px;
  margin: 0 15px 0 1px;
  border: 1px solid #a5a5a5;
  border-radius: 2px;
  background: #e2e2e2;
  flex: none;
  display: grid;
  place-items: center;
}
.check input:checked::after { content: ""; width: 4px; height: 8px; margin-bottom: 2px; border: solid #333; border-width: 0 2px 2px 0; transform: rotate(40deg); }
.check.tight input { margin-right: 11px; }
.skip-caption { width: 301px; }
.skip { width: 60px; height: 26px; padding: 0 4px; border: 1px solid #aaa; border-radius: 2px; background: #fff; }
.format-select { width: 197px; }
.compat-caption { width: 106px; }
.compat-select { width: 112px; }
code { font: 10px "Liberation Mono", monospace; }
.go {
  display: block;
  width: 52px;
  height: 31px;
  margin-left: 14px;
  padding: 0;
  border: 1px solid #aaa;
  border-radius: 12px;
  background: linear-gradient(#fff, #ccc);
  color: #111;
  font-weight: bold;
}
.console {
  position: absolute;
  left: 0;
  bottom: 0;
  display: flex;
  align-items: center;
  gap: 5px;
  width: 70px;
  height: 23px;
  padding: 2px 0 0 8px;
  border: 1px solid #aaa;
  border-width: 1px 1px 0 0;
  border-radius: 0 3px 0 0;
  background: #ccc;
  white-space: nowrap;
}
.console-icon { width: 12px; height: 12px; border: 1px solid #eee; background: #222; flex: none; }

.page-scroll { display: flex; flex-direction: column; align-items: center; width: 17px; flex: none; background: #f1f1f1; }
.track { flex: 1; display: flex; flex-direction: column; align-self: stretch; }
.tri { margin: 7px 0 5px; border: 4px solid transparent; }
.tri.up { border-top: 0; border-bottom: 5px solid #a3a3a3; }
.tri.down { border-bottom: 0; border-top: 5px solid #505050; }
.page-thumb { width: 13px; height: 93%; margin: 0 auto; background: #c1c1c1; }

/* file chooser window */
.dialog {
  position: absolute;
  left: 826px;
  top: 199px;
  width: 944px;
  display: flex;
  flex-direction: column;
  background: #fff;
  box-shadow: 0 0 0 1px #f6f6f6;
  color: #000;
  font-size: 12px;
  line-height: 16px;
}
.titlebar { display: flex; align-items: center; gap: 5px; height: 31px; padding: 0 10px 0 9px; }
.close { margin-left: auto; padding: 0; border: 0; background: none; width: 10px; height: 10px; }
.close svg { display: block; }
.addressbar { display: flex; align-items: center; height: 35px; padding: 0 12px; }
.history { display: flex; align-items: center; width: 94px; gap: 15px; }
.history svg:nth-child(3) { margin-left: -2px; }
.history svg:nth-child(4) { margin-left: -5px; }
.path { display: flex; align-items: center; flex: 1; height: 23px; padding-left: 3px; border: 1px solid #d9d9d9; }
.path .sep { width: 5px; height: 8px; margin: 0 10px 0 11px; }
.path .ico + .sep { margin-left: 6px; }
.drop { width: 10px; height: 6px; margin-left: auto; }
.refresh { display: grid; place-items: center; width: 21px; height: 21px; margin-left: 4px; padding: 0; border: 0; border-left: 1px solid #d9d9d9; background: none; }
.search { display: flex; align-items: center; width: 202px; height: 23px; margin-left: 12px; padding: 0 8px; border: 1px solid #d9d9d9; }
.search input { flex: 1; min-width: 0; border: 0; padding: 0; background: none; outline: 0; }
.search input::placeholder { color: #6d6d6d; opacity: 1; }
.toolbar { display: flex; align-items: center; gap: 30px; height: 32px; padding: 0 15px 0 18px; background: #f5f6f7; border-bottom: 1px solid #e5e8eb; color: #1e395b; }
.toolbar button { display: flex; align-items: center; gap: 6px; border: 0; padding: 0; background: none; }
.caret { border: 4px solid transparent; border-top-color: #1e395b; border-bottom: 0; }
.views { display: flex; align-items: center; margin-left: auto; }
.views .caret { margin: 0 21px 0 9px; }
.toolbar .about { justify-content: center; width: 16px; height: 16px; margin-left: 20px; border-radius: 50%; background: #0a66c2; color: #fff; font-weight: bold; }
.panes { display: flex; height: 354px; }
.places { width: 140px; padding-top: 9px; overflow: hidden; white-space: nowrap; }
.places li { display: flex; align-items: center; gap: 5px; height: 24px; padding-left: 32px; }
.places .top { padding-left: 24px; }
.places li + .top { margin-top: 8px; }
.places .current { background: #d9d9d9; margin-right: 1px; }
.bar { display: flex; flex-direction: column; align-items: center; width: 16px; padding: 6px 0; background: #f0f0f0; flex: none; }
.bar > svg { width: 10px; height: 6px; flex: none; }
.bar .track { margin: 6px 0; }
.thumb-places { height: 174px; margin: auto 0 6px; background: #cdcdcd; }
.thumb-list { height: 206px; margin-top: auto; background: #cdcdcd; }
.list { flex: 1; min-width: 0; overflow: hidden; padding-left: 15px; border-left: 2px solid #f5f5f5; }
table { table-layout: fixed; width: 602px; border-collapse: collapse; border-spacing: 0; }
.c-name { width: 258px; }
.c-date { width: 144px; }
.c-type { width: 120px; }
.c-size { width: 76px; }
.c-end { width: 4px; }
th { position: relative; height: 27px; padding: 2px 0 0 6px; border-right: 1px solid #e2e2e2; text-align: left; font-weight: normal; color: #43597a; }
th:first-child { padding-left: 5px; }
th:nth-child(2) { padding-left: 7px; }
.sort { position: absolute; left: 123px; top: 0; width: 10px; height: 6px; }
td { padding: 0 0 0 8px; color: #6d6d6d; white-space: nowrap; }
td:first-child { padding-left: 5px; color: #000; }
td.size { padding: 0 5px 0 0; }
.cell { display: flex; align-items: center; height: 21px; line-height: 21px; }
.size .cell { justify-content: flex-end; }
.cell.name { gap: 4px; }
.cut .cell { align-items: flex-end; height: 12px; overflow: hidden; }
.ps {
  width: 16px;
  height: 16px;
  flex: none;
  border: 1px solid #7b3fe4;
  background: linear-gradient(#fff, #fff) 3px 11px / 6px 1px no-repeat, #1a1a1a;
  color: #fff;
  font: bold 8px/10px "Open Sans", sans-serif;
  text-align: center;
}
.selected td { background: #cce8ff; box-shadow: inset 0 1px 0 #99d1ff, inset 0 -1px 0 #99d1ff; }
.selected td.size { border-right: 1px solid #99d1ff; }
.footer { position: relative; display: flex; align-items: flex-start; height: 81px; padding: 12px 17px 0 0; background: #f0f0f0; }
.footer > label { width: 192px; padding-right: 4px; text-align: right; line-height: 25px; }
.fname { display: flex; align-items: center; flex: 1; height: 25px; padding-right: 4px; border: 1px solid #7a7a7a; background: #fff; }
.fname input { flex: 1; min-width: 0; padding: 0 3px; border: 0; background: none; outline: 0; }
.fname svg,
.ftype svg { width: 10px; height: 6px; }
.right { width: 188px; margin-left: 13px; }
.ftype { display: flex; align-items: center; height: 25px; padding-right: 4px; border: 1px solid #adadad; background: #e1e1e1; }
.ftype select { flex: 1; appearance: none; padding: 0 3px; border: 0; background: none; outline: 0; }
.actions { display: flex; justify-content: space-between; margin: 7px 1px 0; }
.actions button { width: 86px; height: 24px; padding: 0; border: 1px solid #adadad; background: #e1e1e1; }
.actions .primary { border: 2px solid #0078d7; }
.grip { position: absolute; right: 3px; bottom: 2px; width: 9px; height: 9px; }

/* tutorial marks over the screen */
.marks { position: absolute; inset: 0; pointer-events: none; }
.arrows { position: absolute; inset: 0; width: 100%; height: 100%; fill: #ed1c24; }
.frame { position: absolute; border: 2px solid #ed1c24; }
.f-tab { left: 638px; top: 26px; width: 58px; height: 28px; }
.f-choose { left: 374px; top: 246px; width: 65px; height: 27px; }
.f-file { left: 999px; top: 462px; width: 109px; height: 20px; }
.f-open { left: 1568px; top: 690px; width: 79px; height: 26px; }
.num {
  position: absolute;
  color: #ed1c24;
  font-size: 44px;
  line-height: 48px;
  white-space: nowrap;
  paint-order: stroke fill;
  -webkit-text-stroke: 7px #fff;
  filter: drop-shadow(0 0 1px #999);
}
.n1 { left: 555px; top: 126px; }
.n2 { left: 557px; top: 217px; }
.n3 { left: 784px; top: 506px; }
.n4 { left: 1561px; top: 789px; font-family: "Liberation Sans", sans-serif; font-size: 48px; }
.caption3 { left: 666px; top: 548px; font-size: 32px; -webkit-text-stroke-width: 5px; }
.watermark { position: absolute; right: 8px; bottom: 8px; color: #e6e6e6; font: 16px/22px "Liberation Sans", sans-serif; text-shadow: 1px 1px 0 #ccc; }
</style>
